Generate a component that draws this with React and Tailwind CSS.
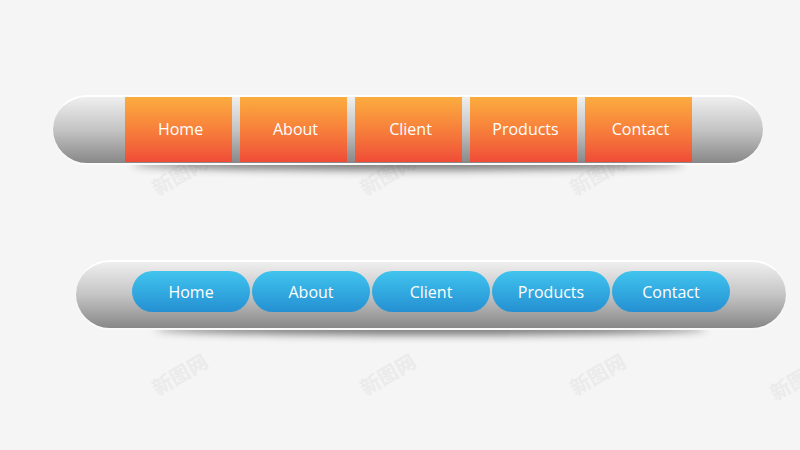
const orange = ['Home', 'About', 'Client', 'Products', 'Contact']

// marcas de agua tenues
const marks = [
  [150, 160], [358, 160], [568, 160],
  [150, 360], [358, 360], [568, 360], [768, 365],
]

function Bar({ children, className = '' }) {
  return (
    <div className={`relative h-[68px] w-[710px] ${className}`}>
      <div className="absolute left-[80px] right-[80px] top-[63px] h-[12px] rounded-[50%] bg-[#222] opacity-60 blur-[4px]" />
      <div className="relative h-full w-full rounded-full border-t-2 border-white bg-gradient-to-b from-[#efefef] via-[#c4c4c4] to-[#888] shadow-[0_2px_0_#fafafa]">
        {children}
      </div>
    </div>
  )
}

export default function App() {
  return (
    <div
      className="relative h-[450px] w-[800px] overflow-hidden bg-[#f5f5f5]"
      style={{ fontFamily: '"Open Sans", "Noto Sans CJK SC", sans-serif' }}
    >
      {marks.map(([x, y], i) => (
        <span
          key={i}
          className="pointer-events-none absolute -rotate-[30deg] whitespace-nowrap text-[20px] font-bold text-[#ebebeb]"
          style={{ left: x, top: y }}
        >
          新图网
        </span>
      ))}

      <div className="relative flex flex-col pt-[95px]">
        <Bar className="ml-[53px]">
          <div className="flex h-full gap-[8px] pl-[72px] pb-[1px]">
            {orange.map((t) => (
              <div
                key={t}
                className="flex h-[65px] w-[107px] items-center justify-center bg-gradient-to-b from-[#fbac3e] to-[#ef4b37] pb-[2px] pl-[4px] text-[16px] text-white"
              >
                {t}
              </div>
            ))}
          </div>
        </Bar>

        <Bar className="ml-[76px] mt-[97px]">
          <div className="flex h-full gap-[2px] pl-[56px] pt-[9px]">
            {orange.map((t) => (
              <div
                key={t}
                className="flex h-[41px] w-[118px] items-center justify-center rounded-full bg-gradient-to-b from-[#41c4ee] to-[#2590d2] text-[16px] text-white"
              >
                {t}
              </div>
            ))}
          </div>
        </Bar>
      </div>
    </div>
  )
}
